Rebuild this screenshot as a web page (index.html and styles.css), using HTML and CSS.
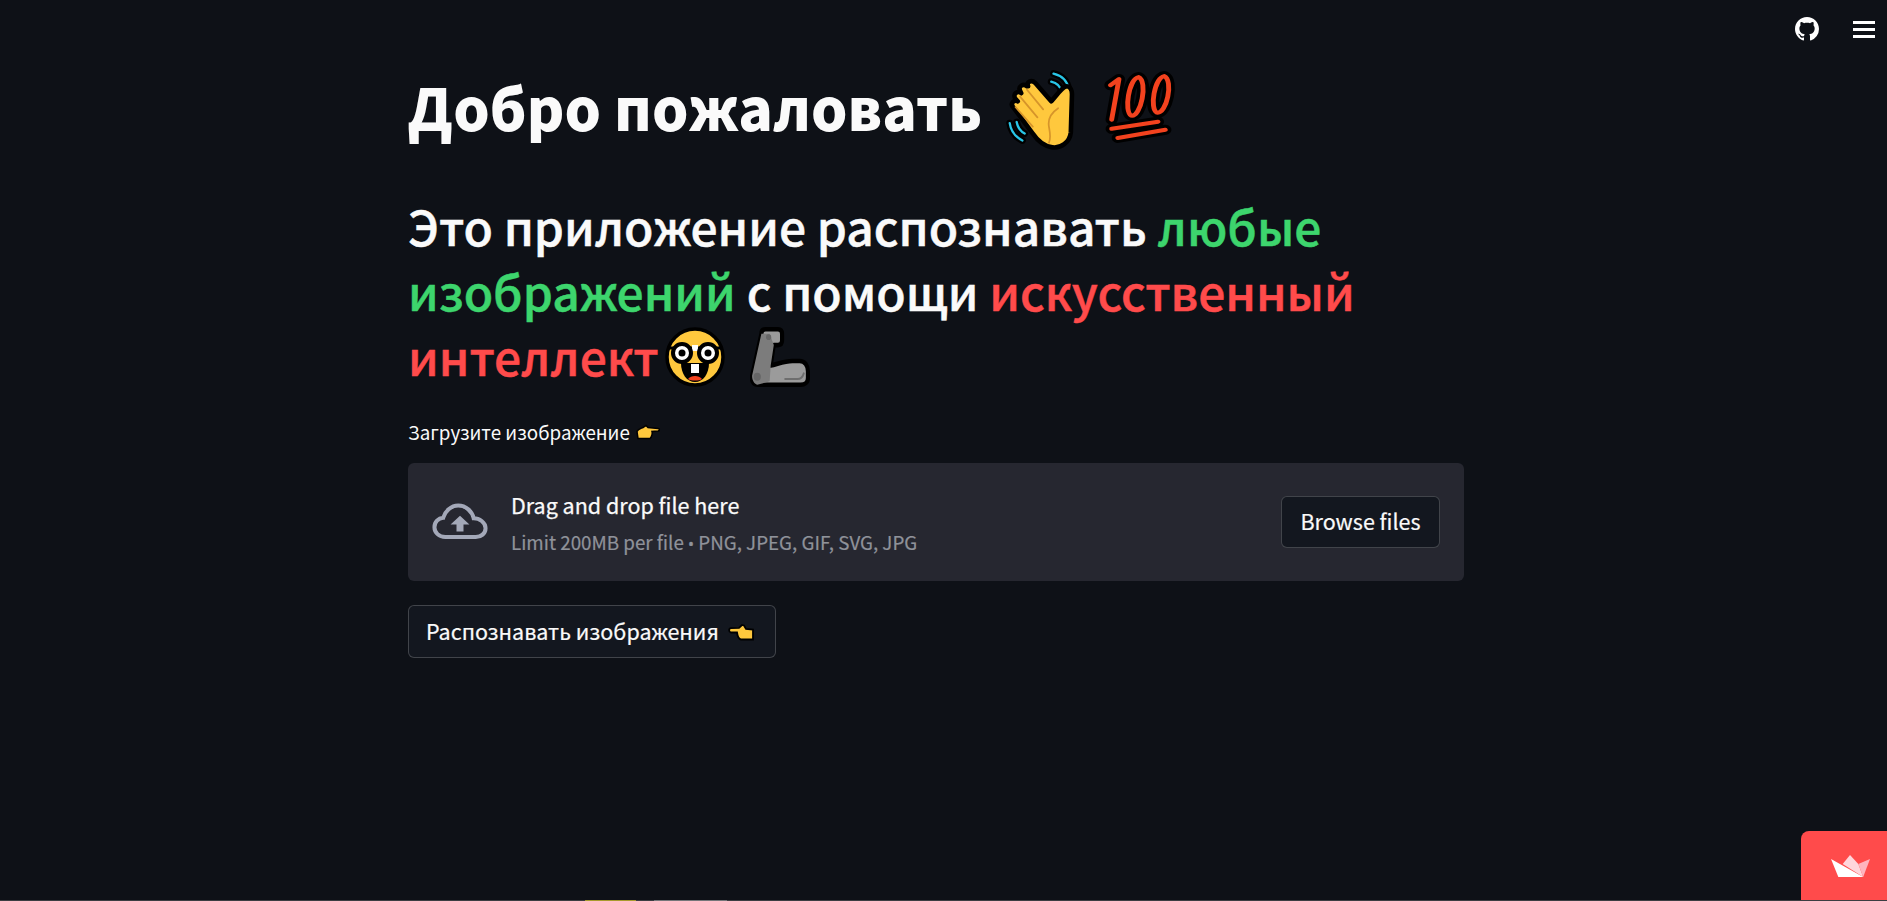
FILE: index.html
```html
<!DOCTYPE html>
<html lang="ru">
<head>
<meta charset="utf-8">
<title>Распознавание изображений</title>
<link rel="stylesheet" href="styles.css">
</head>
<body>
<svg class="sprite" aria-hidden="true">
  <defs>
    <symbol id="point-right" viewBox="0 0 24 16">
      <path d="M1 7.500 C2 5 5 4.500 7 3.500 L10 1.500 12 3.500 22 4.500 C24 5 24 6.500 22 7 L16 7.500 C16.500 9 16 13 14 14.500 L2 14.500Z" fill="#ffc83d" stroke="#000" stroke-width="1.500"/>
    </symbol>
    <symbol id="point-left" viewBox="0 0 26 18">
      <path d="M25 6.500 V16.500 H13 C10 16 9.500 13 9 9.500 H3 C0.500 9 0.500 5.500 3 5.200 L11 4.800 14 2 16 2.500 18 6Z" fill="#ffc83d" stroke="#000" stroke-width="1.800"/>
    </symbol>
  </defs>
</svg>

<header class="toolbar">
  <svg class="github" viewBox="0 0 16 16" aria-hidden="true"><path fill="#fff" d="M8 0C3.580 0 0 3.580 0 8c0 3.540 2.290 6.530 5.470 7.590.4.070.55-.17.55-.38 0-.19-.01-.82-.01-1.490-2.010.37-2.530-.49-2.690-.94-.09-.23-.48-.94-.82-1.130-.28-.15-.68-.52-.01-.53.630-.01 1.080.580 1.230.820.720 1.210 1.870.870 2.330.660.070-.520.280-.870.510-1.070-1.780-.200-3.640-.890-3.640-3.950 0-.870.310-1.590.820-2.150-.080-.200-.360-1.020.080-2.120 0 0 .670-.210 2.200.820.640-.180 1.320-.270 2-.270s1.360.090 2 .270c1.530-1.040 2.200-.820 2.200-.820.440 1.100.160 1.920.080 2.120.510.560.820 1.270.820 2.150 0 3.070-1.870 3.750-3.650 3.950.290.250.540.730.540 1.480 0 1.070-.010 1.930-.010 2.200 0 .210.150.460.550.380A8.010 8.010 0 0 0 16 8c0-4.420-3.580-8-8-8z"/></svg>
  <div class="burger"><span></span><span></span><span></span></div>
</header>

<main class="content">
  <h1 class="title">Добро пожаловать<svg class="emoji wave" viewBox="0 0 64 72" aria-hidden="true">
      <path d="M42 4 C50 6 54 11 55 17 M40 11 C45 12 48 15 49 20 M4 47 C5 54 9 59 15 62 M10 46 C11 51 13 54 17 56" fill="none" stroke="#000" stroke-width="6" stroke-linecap="round"/>
      <path d="M42 4 C50 6 54 11 55 17 M40 11 C45 12 48 15 49 20 M4 47 C5 54 9 59 15 62 M10 46 C11 51 13 54 17 56" fill="none" stroke="#29c5e6" stroke-width="2" stroke-linecap="round"/>
      <path d="M7 33 C4 30 8 26 11 28 L9 26 C6 22 11 18 14 21 L13 19 C11 15 16 12 19 15 L20 15 C18 11 23 9 26 12 L40 28 C44 24 49 16 53 15 C57 15 58 19 58 22 L57 55 C56 64 48 69 41 68 C33 67 28 62 24 56Z" fill="#ffc83d" stroke="#000" stroke-width="4" stroke-linejoin="round"/>
      <path d="M13 24 L28 42 M19 18 L33 35 M9 33 L24 50 M46 34 C40 38 37 44 38 50 C39 56 40 60 38 64" fill="none" stroke="#d6942a" stroke-width="1.500" stroke-linecap="round"/>
    </svg><svg class="emoji hundred" viewBox="0 0 68 76" preserveAspectRatio="none" aria-hidden="true">
      <g fill="none" stroke-linecap="round" stroke-linejoin="round">
        <g stroke="#000" stroke-width="10">
          <path d="M11 16 L18 10 L12 50"/>
          <path d="M34 8 C26 10 22 42 28 46 C36 48 42 12 34 8Z"/>
          <path d="M55 7 C47 9 43 39 49 43 C57 45 63 11 55 7Z"/>
          <path d="M12 59 L50 52 M17 68 L56 60"/>
        </g>
        <g stroke="#f3421e" stroke-width="4">
          <path d="M11 16 L18 10 L12 50"/>
          <path d="M34 8 C26 10 22 42 28 46 C36 48 42 12 34 8Z"/>
          <path d="M55 7 C47 9 43 39 49 43 C57 45 63 11 55 7Z"/>
          <path d="M12 59 L50 52 M17 68 L56 60"/>
        </g>
      </g>
    </svg></h1>

  <h2 class="subtitle">Это приложение распознавать <span class="green">любые</span> <span class="green">изображений</span> с помощи <span class="red">искусственный</span> <span class="red">интеллект</span><svg class="emoji nerd" viewBox="0 0 60 60" aria-hidden="true">
      <circle cx="30" cy="30" r="28" fill="#ffc83d" stroke="#000" stroke-width="3.500"/>
      <path d="M16 36 H44 C44 47 38 55 30 55 C22 55 16 47 16 36Z" fill="#000"/>
      <path d="M26 37 H34 V46 H26Z" fill="#fff"/>
      <path d="M23 52 C26 48 34 48 37 52 C34 54 26 54 23 52Z" fill="#f3421e"/>
      <path d="M3 21 H57" stroke="#000" stroke-width="3"/>
      <path d="M27 18 H33 V24 H27Z" fill="#fff"/>
      <circle cx="17" cy="26" r="9" fill="#fff" stroke="#000" stroke-width="4"/>
      <circle cx="43" cy="26" r="9" fill="#fff" stroke="#000" stroke-width="4"/>
      <circle cx="17" cy="26" r="3.500" fill="#000"/>
      <circle cx="43" cy="26" r="3.500" fill="#000"/>
    </svg><svg class="emoji arm" viewBox="1 2 58 53" preserveAspectRatio="none" aria-hidden="true">
      <path d="M12 8 C12 5 14 4 16 4 H28 C31 4 32 6 32 8 V14 C32 17 30 18 28 18 H24 L21 36 C27 35 34 32 42 32 H49 C54 32 57 36 57 41 V47 C57 51 54 53 50 53 H9 C4 53 2 49 3 45Z" fill="#9b9b9b" stroke="#000" stroke-width="4" stroke-linejoin="round"/>
      <path d="M12 8 L3 45 C3 49 5 52 8 53 L20 50 L21 36 L24 18 L20 8Z" fill="#7c7c7c"/>
      <circle cx="8" cy="46" r="3.500" fill="#666"/>
      <circle cx="19" cy="11" r="2.500" fill="#666"/>
      <path d="M35 48 H47 C50 48 52 46 53 43" fill="none" stroke="#6e6e6e" stroke-width="1.800" stroke-linecap="round"/>
    </svg></h2>

  <label class="upload-label">Загрузите изображение <svg class="emoji hand-small"><use href="#point-right"/></svg></label>

  <section class="dropzone">
    <svg class="cloud" viewBox="0 0 16 16" aria-hidden="true"><path fill="none" stroke="#a3a8b8" stroke-width="1.150" d="M3.800 12.300 C2 12.300 .7 11 .7 9.500 C.7 8 1.800 6.900 3.200 6.800 C3.700 5 5.400 3.300 7.500 3.300 C9.700 3.300 11.500 5 11.900 6.900 C13.500 6.900 15.300 8.100 15.300 9.800 C15.300 11.300 14 12.300 12.500 12.300Z"/><path fill="#a3a8b8" d="M8 6.200 10.700 8.700 H9 V10.700 H7 V8.700 H5.300Z"/></svg>
    <div class="drop-text">
      <span class="drop-title">Drag and drop file here</span>
      <small class="drop-limit">Limit 200MB per file <b class="dot">•</b> PNG, JPEG, GIF, SVG, JPG</small>
    </div>
    <button class="btn browse">Browse files</button>
  </section>

  <button class="btn recognize">Распознавать изображения <svg class="emoji hand-left"><use href="#point-left"/></svg></button>
</main>

<a class="ship-badge" aria-label="Streamlit">
  <svg viewBox="0 0 40 22" preserveAspectRatio="none" aria-hidden="true">
    <path d="M19.500 0 L28 9 L33 22 L12 9Z" fill="#ffd6dc"/>
    <path d="M40 4 L33 22 L28 9Z" fill="#ffb4be"/>
    <path d="M0 4 L33 22 H7.500Z" fill="#fff"/>
  </svg>
</a>

<div class="bottom-strip"><i class="strip-a"></i><i class="strip-b"></i></div>
</body>
</html>
```

FILE: styles.css
```css
* { box-sizing: border-box; }
html, body { margin: 0; height: 100%; }
body {
  background: #0e1117;
  color: #fafafa;
  font-family: "Noto Sans CJK SC", "Noto Sans", sans-serif;
  height: 901px;
  overflow: hidden;
  position: relative;
}
.sprite { position: absolute; width: 0; height: 0; }

.toolbar {
  position: absolute;
  top: 17px;
  right: 12px;
  display: flex;
  align-items: center;
  gap: 34px;
}
.github { width: 24px; height: 24px; }
.burger { width: 22px; display: flex; flex-direction: column; gap: 4px; }
.burger span { height: 3px; background: #fff; }

.content {
  width: 1056px;
  margin-left: 408px;
  padding-top: 63px;
  display: flex;
  flex-direction: column;
  align-items: flex-start;
}
.emoji { flex: none; display: inline-block; }

.title {
  margin: 0;
  font-size: 57.3px;
  font-weight: 900;
  line-height: 88px;
  height: 88px;
  white-space: nowrap;
}
.wave { width: 74px; height: 83px; vertical-align: -21px; margin-left: 23px; }
.hundred { width: 83px; height: 77px; vertical-align: -15px; margin-left: 18px; }

.subtitle {
  margin: 42px 0 0;
  font-size: 47.9px;
  font-weight: 500;
  -webkit-text-stroke: 0.5px currentColor;
  line-height: 65px;
  width: 1056px;
}
.green { color: #3dd56d; }
.red { color: #ff4b4b; }
.nerd { width: 60px; height: 60px; vertical-align: -11px; margin-left: 6px; }
.arm { width: 60px; height: 60px; vertical-align: -11px; margin-left: 25px; }

.upload-label {
  margin-top: 30px;
  font-size: 18.8px;
  line-height: 28px;
  height: 28px;
  display: flex;
  align-items: center;
  gap: 6px;
}
.hand-small { width: 24px; height: 16px; }

.dropzone {
  margin-top: 17px;
  width: 1056px;
  height: 118px;
  background: #262730;
  border-radius: 6px;
  display: flex;
  align-items: center;
  padding: 0 24px;
}
.cloud { width: 56px; height: 56px; flex: none; margin-right: 23px; }
.drop-text { display: flex; flex-direction: column; flex: 1; margin-top: 3px; }
.drop-title { font-size: 21.5px; line-height: 32px; font-weight: 400; -webkit-text-stroke: 0.25px currentColor; }
.drop-limit { font-size: 18.8px; line-height: 28px; margin-top: 7px; color: #8f929a; -webkit-text-stroke: 0.2px currentColor; }
.dot { font-family: "Noto Sans", sans-serif; font-weight: 400; font-size: 16px; }

.btn {
  font-family: inherit;
  color: #fafafa;
  background: #13171f;
  border: 1px solid rgba(250, 250, 250, 0.2);
  border-radius: 6px;
  font-size: 21.5px;
  font-weight: 400;
  -webkit-text-stroke: 0.2px currentColor;
}
.browse { width: 159px; height: 52px; padding: 0 0 3px; }
.recognize {
  margin-top: 24px;
  width: 368px;
  height: 53px;
  padding: 0 0 3px 17px;
  display: flex;
  align-items: center;
  justify-content: flex-start;
  gap: 9px;
}
.hand-left { width: 26px; height: 18px; margin-top: 3px; }

.ship-badge {
  position: absolute;
  right: 0;
  bottom: 1px;
  width: 86px;
  height: 69px;
  padding-left: 13px;
  background: #ff4b4b;
  border-radius: 8px 0 0 0;
  display: flex;
  align-items: center;
  justify-content: center;
}
.ship-badge svg { width: 39px; height: 22px; }

.bottom-strip {
  position: absolute;
  left: 0;
  right: 0;
  bottom: 0;
  height: 1px;
  background: #3b3d42;
}
.strip-a, .strip-b { position: absolute; top: 0; height: 1px; }
.strip-a { left: 585px; width: 51px; background: #a89a2e; }
.strip-b { left: 654px; width: 73px; background: #75767a; }
```
